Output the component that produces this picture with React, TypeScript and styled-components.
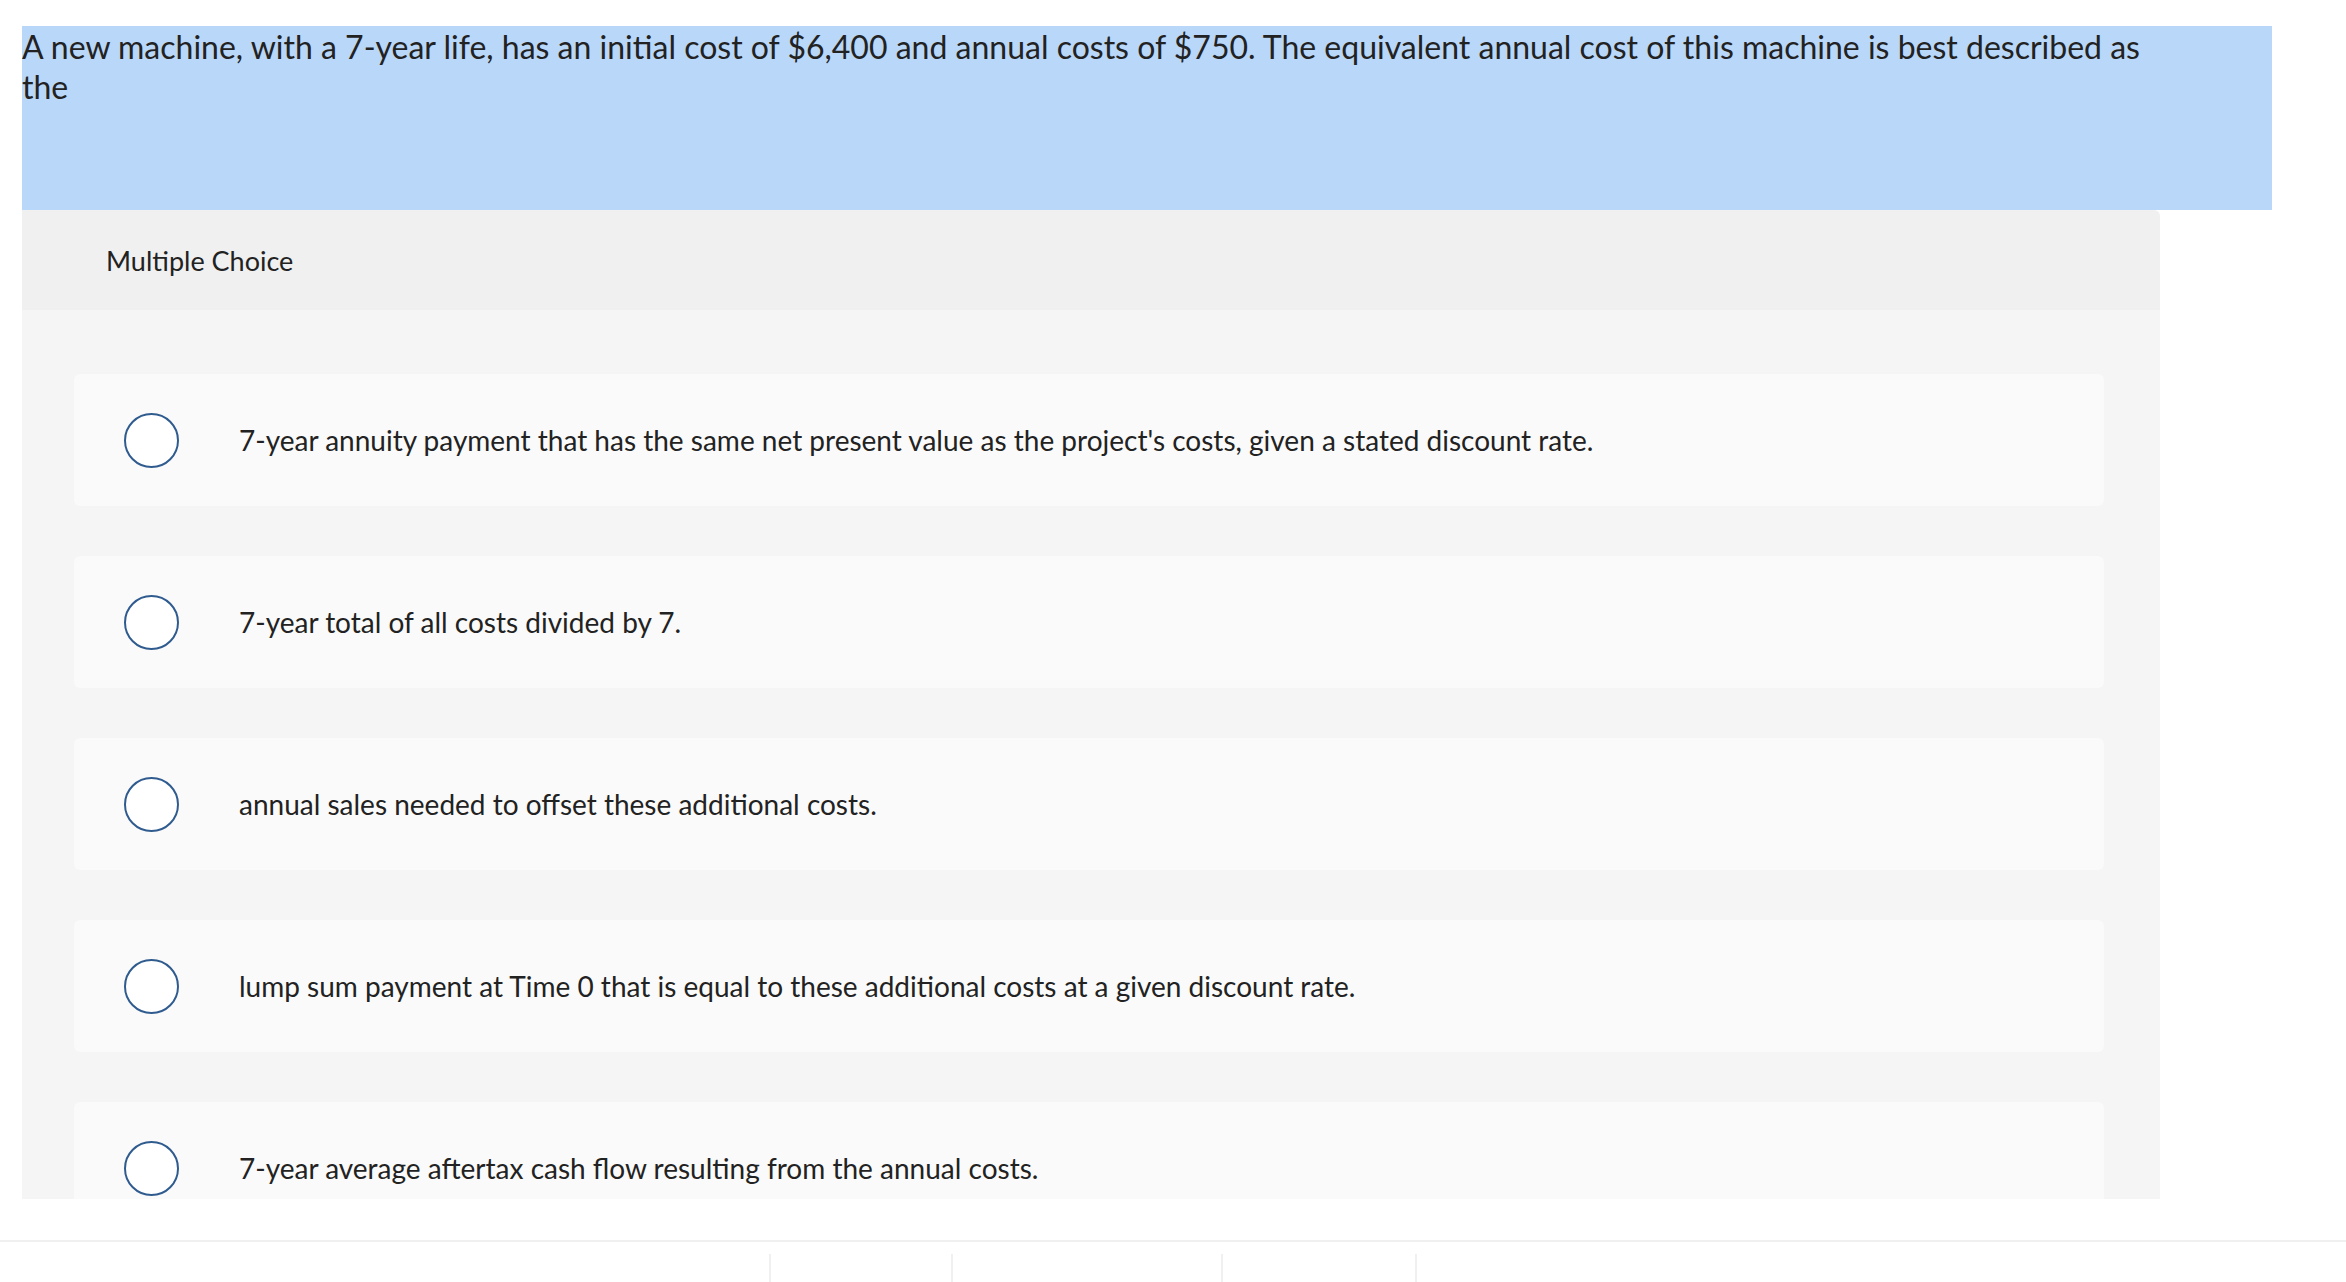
import React from "react";
import styled, { createGlobalStyle } from "styled-components";

const choices = [
  "7-year annuity payment that has the same net present value as the project's costs, given a stated discount rate.",
  "7-year total of all costs divided by 7.",
  "annual sales needed to offset these additional costs.",
  "lump sum payment at Time 0 that is equal to these additional costs at a given discount rate.",
  "7-year average aftertax cash flow resulting from the annual costs.",
];

// footer column widths, left to right
const footerCells = [769, 182, 270, 194, 931];

const GlobalStyle = createGlobalStyle`
  body {
    margin: 0;
    background: #ffffff;
    font-family: Lato, "Open Sans", Arial, sans-serif;
    color: #222222;
  }
`;

const Page = styled.div`
  padding: 26px 0 0 22px;
  min-height: 1256px;
  display: flex;
  flex-direction: column;
`;

const Question = styled.div`
  width: 2250px;
  height: 184px;
  background: #b9d7f9;
  box-sizing: border-box;
  padding-top: 1px;
`;

const QuestionText = styled.p`
  margin: 0;
  width: 2140px;
  font-size: 32px;
  line-height: 40px;
  color: #222222;
`;

const Panel = styled.div`
  width: 2138px;
  border-top-right-radius: 6px;
  overflow: hidden;
`;

const PanelHeader = styled.div`
  height: 100px;
  background: #f0f0f0;
  padding-left: 84px;
  display: flex;
  align-items: center;
  font-size: 27px;
  color: #222222;
`;

const PanelBody = styled.div`
  height: 889px;
  overflow: hidden;
  background: #f5f5f5;
  padding: 64px 56px 0 52px;
  box-sizing: border-box;
  display: flex;
  flex-direction: column;
  gap: 50px;
`;

const Choice = styled.label`
  flex: none;
  height: 132px;
  background: #fafafa;
  border-radius: 6px;
  display: flex;
  align-items: center;
  padding-left: 50px;
  gap: 60px;
  font-size: 28px;
  color: #222222;
`;

const Radio = styled.span`
  flex: none;
  width: 55px;
  height: 55px;
  box-sizing: border-box;
  border: 2.5px solid #2f5b8f;
  border-radius: 50%;
  background: #ffffff;
`;

const Footer = styled.div`
  margin: 41px 0 0 -22px;
  border-top: 2px solid #f0f0f0;
  padding-top: 12px;
  display: flex;
  flex: 1;
`;

const FooterCell = styled.div<{ $first?: boolean }>`
  height: 30px;
  box-sizing: border-box;
  border-left: ${({ $first }) => ($first ? "none" : "2px solid #f0f0f0")};
`;

export default function App() {
  return (
    <Page>
      <GlobalStyle />
      <Question>
        <QuestionText>
          A new machine, with a 7-year life, has an initial cost of $6,400 and
          annual costs of $750. The equivalent annual cost of this machine is
          best described as the
        </QuestionText>
      </Question>
      <Panel>
        <PanelHeader>Multiple Choice</PanelHeader>
        <PanelBody>
          {choices.map((text) => (
            <Choice key={text}>
              <Radio />
              <span>{text}</span>
            </Choice>
          ))}
        </PanelBody>
      </Panel>
      <Footer>
        {footerCells.map((w, i) => (
          <FooterCell key={i} $first={i === 0} style={{ width: w }} />
        ))}
      </Footer>
    </Page>
  );
}
